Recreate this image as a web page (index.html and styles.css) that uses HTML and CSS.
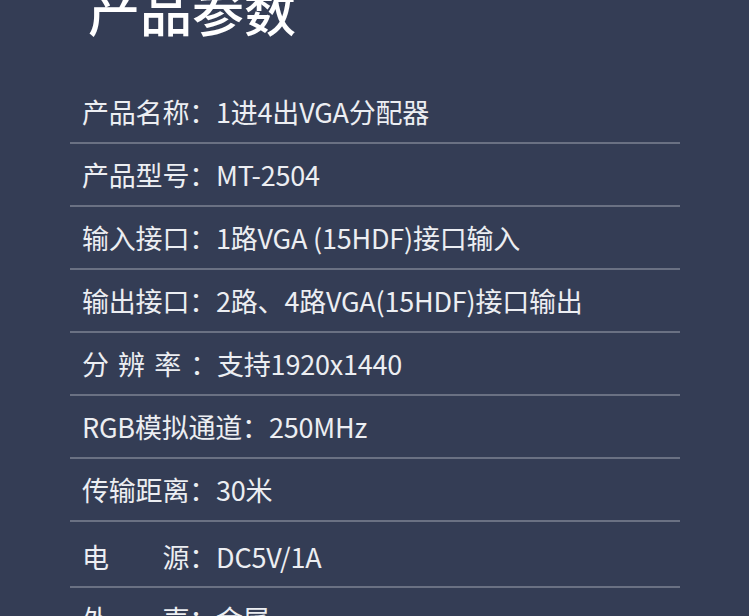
FILE: index.html
```html
<!DOCTYPE html>
<html lang="zh-CN">
<head>
  <meta charset="UTF-8">
  <meta name="viewport" content="width=device-width, initial-scale=1.0">
  <title>产品参数 - MT-2504</title>
  <link rel="stylesheet" href="styles.css">
</head>
<body>
  <div class="page">
    <h1 class="title">产品参数</h1>

    <ul class="params">
      <li><span class="label">产品名称：</span>1进4出VGA分配器</li>
      <li><span class="label">产品型号：</span>MT-2504</li>
      <li><span class="label">输入接口：</span>1路VGA (15HDF)接口输入</li>
      <li><span class="label">输出接口：</span>2路、4路VGA(15HDF)接口输出</li>
      <li><span class="label spread">分辨率：</span>支持1920x1440</li>
      <li><span class="label">RGB模拟通道：</span>250MHz</li>
      <li><span class="label">传输距离：</span>30米</li>
      <li class="tall"><span class="label">电　　源：</span>DC5V/1A</li>
      <li><span class="label">外　　壳：</span>金属</li>
    </ul>
  </div>
</body>
</html>
```

FILE: styles.css
```css
body {
  margin: 0;
  background: #343d55;
  color: #eceef2;
  font-family: "Noto Sans CJK SC", "Noto Sans", sans-serif;
  overflow: hidden;
}
.page {
  width: 610px;
  padding-left: 70px;
}
.title {
  margin: -16px 0 45px 18px;
  font-size: 52px;
  line-height: 52px;
  font-weight: 500;
  color: #ffffff;
}
.params {
  list-style: none;
  margin: 0;
  padding: 0;
}
.params li {
  display: flex;
  align-items: center;
  height: 61px;
  padding-left: 12px;
  border-bottom: 2px solid #6a7183;
  font-size: 27px;
  letter-spacing: -0.2px;
  white-space: nowrap;
}
.params li.tall {
  height: 66px;
  padding-top: 4px;
  box-sizing: border-box;
}
.label.spread {
  display: inline-block;
  width: 135px;
  text-align-last: justify;
}
```
